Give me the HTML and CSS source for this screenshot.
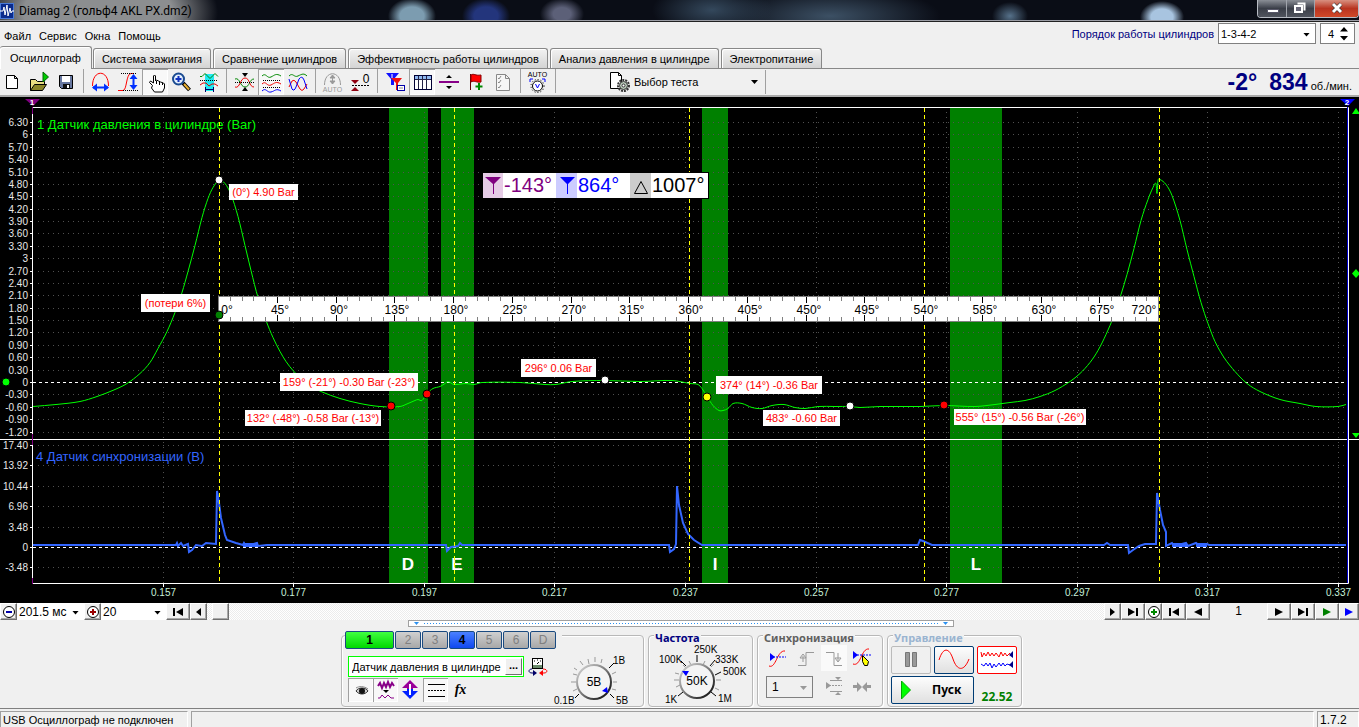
FILE: index.html
```html
<!DOCTYPE html>
<html lang="ru">
<head>
<meta charset="utf-8">
<title>Diamag 2 (гольф4 AKL PX.dm2)</title>
<link rel="stylesheet" href="styles.css">
</head>
<body>
<div class="window">
  <header class="titlebar">
    <svg class="app-icon" width="14" height="16" viewBox="0 0 14 16"><rect width="14" height="16" fill="#0a2a8c"/><rect x="0.5" y="0.5" width="13" height="15" fill="none" stroke="#4a7ad8"/><path d="M0 8h3l1-4 1 8 2-10 1 11 2-8 1 5 1-2h2" fill="none" stroke="#fff"/></svg>
    <h1 class="title">Diamag 2 (гольф4 AKL PX.dm2)</h1>
    <div class="win-buttons">
      <button class="wb" aria-label="Свернуть"><svg width="28" height="17" viewBox="0 0 28 17"><rect x="9.500" y="9.500" width="11" height="3" fill="#fff" stroke="#556"/></svg></button>
      <button class="wb" aria-label="Восстановить"><svg width="27" height="17" viewBox="0 0 27 17"><path d="M10.500 3.500h7v7" fill="none" stroke="#fff" stroke-width="2"/><rect x="8" y="6" width="7" height="6" fill="#667" stroke="#fff" stroke-width="2"/></svg></button>
      <button class="wb close" aria-label="Закрыть"><svg width="43" height="17" viewBox="0 0 43 17"><path d="M18 4l8 8M26 4l-8 8" stroke="#333" stroke-width="4"/><path d="M18 4l8 8M26 4l-8 8" stroke="#fff" stroke-width="3"/></svg></button>
    </div>
  </header>

  <div class="menurow">
    <nav class="menu"><button>Файл</button><button>Сервис</button><button>Окна</button><button>Помощь</button></nav>
    <div class="order">
      <label for="order">Порядок работы цилиндров</label>
      <span class="combo boxed order-combo"><select id="order"><option>1-3-4-2</option></select></span>
      <span class="spin"><input aria-label="Число цилиндров" value="4"><svg width="9" height="14" viewBox="0 0 9 14"><path d="M0 4.500h8L4 0zM0 9h8l-4 4.500z"/></svg></span>
    </div>
  </div>

  <div class="tabs" role="tablist">
    <button role="tab" class="tab active" aria-selected="true">Осциллограф</button>
    <button role="tab" class="tab">Система зажигания</button>
    <button role="tab" class="tab">Сравнение цилиндров</button>
    <button role="tab" class="tab">Эффективность работы цилиндров</button>
    <button role="tab" class="tab">Анализ давления в цилиндре</button>
    <button role="tab" class="tab">Электропитание</button>
  </div>

  <div class="toolbar">
    <div class="tools">
      <button class="tool" aria-label="Новый"><svg viewBox="0 0 26 26"><path d="M7.500 6.500h8l3 3v10h-11zM15.500 6.500v3h3" fill="#fff" stroke="#000"/></svg></button>
      <button class="tool" aria-label="Открыть"><svg viewBox="0 0 26 26"><path d="M4.500 21.500v-11h5l2 2h7v4" fill="#e8dc80" stroke="#000"/><path d="M4.500 21.500l4-6h12l-4 6z" fill="#8a8428" stroke="#000"/><path d="M17 3l5.500 5-5.500 5z" fill="#0c0" stroke="#060"/></svg></button>
      <button class="tool" aria-label="Сохранить"><svg viewBox="0 0 26 26"><path d="M6.500 6.500h13v13h-11l-2-2z" fill="#6878a0" stroke="#000"/><path d="M9 7h8v6H9z" fill="#fff"/><path d="M10 15h7v4h-7z" fill="#111"/><path d="M14 16h2v3h-2z" fill="#fff"/></svg></button>
      <i class="sep"></i>
      <button class="tool" aria-label="Масштаб по времени"><svg viewBox="0 0 26 26" fill="none"><path d="M4.500 17c0-17 16-17 16 0" stroke="#f00"/><path d="M5 18.500h15" stroke="#0030ff" stroke-width="2"/><path d="M4 18.500l5-4v8zM21 18.500l-5-4v8z" fill="#0030ff"/></svg></button>
      <button class="tool" aria-label="Масштаб по амплитуде"><svg viewBox="0 0 26 26" fill="none"><path d="M3 21.500h5c4 0 3-17 8-17h3" stroke="#f00"/><path d="M6 4.500h16M8 21.500h15" stroke="#000" stroke-dasharray="1 1"/><path d="M18.500 8v10" stroke="#0030ff" stroke-width="2"/><path d="M18.500 5l-4 5h8zM18.500 21l-4-5h8z" fill="#0030ff"/></svg></button>
      <button class="tool pressed" aria-label="Рука"><svg viewBox="0 0 26 26"><path d="M10.500 16.500l-3-3 1-1.500 3 2v-7l1-1 1 1v5l1-1 2 1 2 1 3 1 1 1v4l-2 4h-8l-3-4z" fill="#fff" stroke="#000"/><path d="M14.500 12v3M17.500 13v3M20.500 14v2" stroke="#000"/></svg></button>
      <button class="tool" aria-label="Лупа"><svg viewBox="0 0 26 26"><path d="M14 14l6.500 7" stroke="#000" stroke-width="4"/><path d="M15 15l5 5.500" stroke="#e8b030" stroke-width="2"/><circle cx="9.500" cy="10" r="5.500" fill="#e4f0ff" stroke="#1a4a90" stroke-width="2"/><path d="M9.500 7v6M6.500 10h6" stroke="#1030c0" stroke-width="2"/></svg></button>
      <button class="tool" aria-label="Участок"><svg viewBox="0 0 26 26" fill="none"><path d="M9 5h9v17H9z" fill="#20e8f0"/><path d="M4 7.500h2l3-3 2 2 3 3 3-3 2-2 3 3" stroke="#080"/><path d="M4 16l3-2 3 0 3 3 3-2 3 0 3 2" stroke="#d00"/><path d="M4 11.500h18" stroke="#000" stroke-dasharray="1 1"/><path d="M9.500 18v5M17.500 18v5M10 20.500h7" stroke="#006" /></svg></button>
      <i class="sep"></i>
      <button class="tool" aria-label="Совместить"><svg viewBox="0 0 26 26" fill="none"><path d="M4 10c5-2 5 8 10 8s4-8 9-8" stroke="#080"/><path d="M4 18c5 2 5-9 10-9s4 9 9 9" stroke="#e00"/><path d="M4 13.500h19" stroke="#000" stroke-dasharray="1 1"/><path d="M11 4h6l-3 4zM11 22h6l-3-4z" fill="#000"/></svg></button>
      <button class="tool pressed" aria-label="Раздельно"><svg viewBox="0 0 26 26" fill="none"><path d="M4 7c4-4 5 3 9 1s5-4 10-1" stroke="#080"/><path d="M4 15c4-4 5 3 9 1s5-4 10-1" stroke="#e00"/><path d="M4 22c4-4 5 2 9 1s5-4 10-1" stroke="#00f"/><path d="M5 11.500h18M5 18.500h18" stroke="#000" stroke-dasharray="1 1"/></svg></button>
      <button class="tool" aria-label="Наложение"><svg viewBox="0 0 26 26" fill="none"><path d="M4 7c4-4 5 2 9 0s6-3 9 0" stroke="#080"/><path d="M4 18l3-6q2-2 4 1l4 7q2 3 4 0l3-5" stroke="#e00"/><path d="M4 10l3 10q2 3 4-2l3-8q3-4 5 1l3 9" stroke="#00f"/></svg></button>
      <i class="sep"></i>
      <button class="tool" aria-label="Авто" disabled><svg viewBox="0 0 26 26" fill="none"><path d="M4.500 16c0-15 16-15 16 0" stroke="#999"/><path d="M12.500 6v9M10 9l2.500-3 2.500 3zM10 12l2.500 3 2.500-3z" stroke="#999" fill="#999"/><text x="12.500" y="23" class="tiny">AUTO</text></svg></button>
      <button class="tool" aria-label="Ноль"><svg viewBox="0 0 26 26" fill="none"><path d="M4 11h8l-4 4zM4 22h8l-4-4z" fill="#900010"/><path d="M5 16.500h18" stroke="#000" stroke-dasharray="2 1"/><text x="19" y="14" class="zero">0</text></svg></button>
      <i class="sep"></i>
      <button class="tool" aria-label="Маркеры"><svg viewBox="0 0 26 26"><path d="M4 4h13l-5 6v6h-3v-6z" fill="#1010ff"/><path d="M9 9h11l-4 5v7h-2v-7z" fill="#f01010"/><path d="M10 5v4" stroke="#fff"/><rect x="15.500" y="16.500" width="7" height="5" fill="#fff" stroke="#00a"/><path d="M17 19h4" stroke="#888"/></svg></button>
      <button class="tool pressed" aria-label="Таблица"><svg viewBox="0 0 26 26"><rect x="5.500" y="6.500" width="17" height="14" fill="#fff" stroke="#003"/><path d="M6 7h16v3H6z" fill="#90b8f0"/><path d="M6 10.500h16M9.500 7v13M13.500 7v13M17.500 7v13" stroke="#224"/></svg></button>
      <button class="tool" aria-label="Разделитель"><svg viewBox="0 0 26 26"><path d="M3 12h20v2H3z" fill="#808"/><path d="M10 9h6l-3-3zM10 17h6l-3 3z" fill="#000"/></svg></button>
      <button class="tool" aria-label="Флаг"><svg viewBox="0 0 26 26"><path d="M7.500 5v16" stroke="#600"/><path d="M8 6c3-2 4 1 10 0v7c-4 1-7-2-10 0z" fill="#f00" stroke="#800"/><path d="M16 14v7M12.500 17.500h7" stroke="#080" stroke-width="2"/></svg></button>
      <button class="tool" aria-label="Отчёт" disabled><svg viewBox="0 0 26 26"><path d="M6.500 5.500h9l4 4v12h-13zM15.500 5.500v4h4" fill="#f6f6f6" stroke="#888"/><path d="M8 9l1 1 2-3M8 13l1 1 2-3M8 18l1 1 2-3" fill="none" stroke="#888"/></svg></button>
      <i class="sep"></i>
      <button class="tool" aria-label="Авто напряжение"><svg viewBox="0 0 26 26" fill="none"><text x="12.500" y="8" class="tiny">AUTO</text><path d="M5 13v-3h3M20 13v-3h-3" stroke="#00f"/><circle cx="12.500" cy="17" r="5" stroke="#000" fill="#fff"/><circle cx="12.500" cy="17" r="6.500" stroke="#000" stroke-dasharray="1 2"/><path d="M10.500 15l2 4 2-4" stroke="#00f"/></svg></button>
      <i class="sep"></i>
    </div>
    <button class="test">
      <svg width="20" height="22" viewBox="0 0 20 22"><path d="M0.500 1.500h8l3 3v13h-11zM8.500 1.500v3h3" fill="#fff" stroke="#000"/><circle cx="13.500" cy="14.500" r="5.500" fill="none" stroke="#333" stroke-width="2" stroke-dasharray="2 1"/><circle cx="13.500" cy="14.500" r="4" fill="#b8c8b8" stroke="#333"/><circle cx="13.500" cy="14.500" r="1.500" fill="#fff" stroke="#333"/></svg>
      <span>Выбор теста</span><i class="arrow"></i>
    </button>
    <i class="sep"></i>
    <output class="rpm"><b>-2°</b><b>834</b><span>об./мин.</span></output>
  </div>

  <main class="scope"><svg id="scope" viewBox="0 97 1359 506" role="img" aria-label="Осциллограмма"></svg></main>

  <div class="navrow">
    <button class="nb w16" aria-label="Уменьшить"><svg width="14" height="14" viewBox="0 0 14 14"><circle cx="7" cy="7" r="5.500" fill="#fff" stroke="#000"/><path d="M4 7h6" stroke="#00a" stroke-width="2"/></svg></button>
    <span class="combo time-combo"><select aria-label="Развёртка"><option>201.5 мс</option></select></span>
    <button class="nb w16" aria-label="Увеличить"><svg width="14" height="14" viewBox="0 0 14 14"><circle cx="7" cy="7" r="5.500" fill="#fff" stroke="#000"/><path d="M4 7h6M7 4v6" stroke="#900" stroke-width="2"/></svg></button>
    <span class="combo div-combo"><select aria-label="Деление"><option>20</option></select></span>
    <button class="nb w24" aria-label="В начало"><svg width="12" height="8" viewBox="0 0 12 8"><path d="M1 0h2v8H1zM11 0v8L4 4z"/></svg></button>
    <button class="nb w16" aria-label="Влево"><svg width="5" height="8" viewBox="0 0 5 8"><path d="M5 0v8L0 4z"/></svg></button>
    <div class="track"><button class="nb w16 thumb" aria-label="Ползунок"></button></div>
    <button class="nb w16" aria-label="Вправо"><svg width="5" height="8" viewBox="0 0 5 8"><path d="M0 0v8l5-4z"/></svg></button>
    <button class="nb w24" aria-label="В конец"><svg width="12" height="8" viewBox="0 0 12 8"><path d="M9 0h2v8H9zM1 0v8l7-4z"/></svg></button>
    <button class="nb w16" aria-label="Добавить"><svg width="14" height="14" viewBox="0 0 14 14"><circle cx="7" cy="7" r="5.500" fill="#fff" stroke="#000"/><path d="M4 7h6M7 4v6" stroke="#080" stroke-width="2"/></svg></button>
    <button class="nb w24" aria-label="Первый"><svg width="12" height="8" viewBox="0 0 12 8"><path d="M1 0h2v8H1zM11 0v8L4 4z"/></svg></button>
    <button class="nb w24" aria-label="Предыдущий"><svg width="8" height="8" viewBox="0 0 8 8"><path d="M8 0v8L0 4z"/></svg></button>
    <output class="page">1</output>
    <button class="nb w24" aria-label="Следующий"><svg width="8" height="8" viewBox="0 0 8 8"><path d="M0 0v8l8-4z"/></svg></button>
    <button class="nb w24" aria-label="Последний"><svg width="12" height="8" viewBox="0 0 12 8"><path d="M9 0h2v8H9zM1 0v8l7-4z"/></svg></button>
    <button class="nb w24" aria-label="Воспроизвести"><svg width="8" height="8" viewBox="0 0 8 8"><path d="M0 0v8l8-4z" fill="#008000"/></svg></button>
    <button class="nb w20" aria-label="Запись"><svg width="8" height="8" viewBox="0 0 8 8"><path d="M0 0v8l8-4z" fill="#00f"/></svg></button>
  </div>

  <div class="splitter"><i></i><b></b><i></i></div>

  <div class="panels">
    <section class="group channels">
      <div class="chbar"><button class="ch c1">1</button><button class="ch">2</button><button class="ch">3</button><button class="ch c4">4</button><button class="ch">5</button><button class="ch">6</button><button class="ch">D</button></div>
      <div class="chbody">
        <div class="chleft">
          <div class="row">
            <span class="sensor"><input aria-label="Датчик" value="Датчик давления в цилиндре"><button aria-label="Выбрать">...</button></span>
            <button class="tool" aria-label="Полярность"><svg viewBox="0 0 26 26" fill="none"><rect x="8.500" y="2.500" width="10" height="10" fill="#fff" stroke="#000"/><path d="M10 5h1M13 4h1M16 5h1M13 8l2-2" stroke="#000"/><path d="M9 9h9v3H9z" fill="#6a8a6a"/><path d="M8 13c-4 0-4 4 0 4h2" stroke="#006"/><path d="M9 14l4 3-4 3z" fill="#006"/><path d="M19 13c5 0 5 4 1 4h-3" stroke="#f00"/><path d="M19 14l-4 3 4 3z" fill="#f00"/></svg></button>
          </div>
          <div class="row icons">
            <button class="tool pressed" aria-label="Видимость"><svg viewBox="0 0 26 26" fill="none"><path d="M8 13c2-4 10-4 12 0-3 4-9 4-12 0z" fill="#ccc" stroke="#333"/><circle cx="14" cy="13" r="3" fill="#111"/><path d="M8 10c3-2 8-2 12 1" stroke="#888"/></svg></button>
            <button class="tool pressed" aria-label="Фильтр"><svg viewBox="0 0 26 26" fill="none"><path d="M5 8l2-3 2 5 2-5 2 4 2-5 2 5 2-4 2 3" stroke="#808" stroke-width="2"/><path d="M10 12h6l-3 3z" fill="#000"/><path d="M5 20h2l2-3 3 3 3-3 3 3h3" stroke="#808"/></svg></button>
            <button class="tool" aria-label="Инверсия"><svg viewBox="0 0 26 26"><path d="M12 2l8 8h-5v3H9v-3H4z" fill="#909"/><path d="M12 21l8-8h-5v-2H9v2H4z" fill="#0020ff"/><path d="M12 6v11" stroke="#fff" stroke-width="2"/></svg></button>
            <button class="tool pressed" aria-label="Уровни"><svg viewBox="0 0 26 26"><path d="M5 6.500h17M5 18.500h17" stroke="#000"/><path d="M5 12.500h17" stroke="#000" stroke-dasharray="2 1"/></svg></button>
            <button class="tool fx" aria-label="Функция"><i>fx</i></button>
          </div>
        </div>
        <svg class="knob" width="92" height="62" viewBox="550 648 92 62">
          <defs><linearGradient id="rim" x1="0" y1="0" x2="1" y2="1"><stop offset="0" stop-color="#ddd"/><stop offset="0.5" stop-color="#777"/><stop offset="1" stop-color="#000"/></linearGradient></defs>
          <g stroke="#999"><path d="M574 667l3 2M580 660l3 4M588 658l1 5M595 656v5M602 658l-1 4M573 673l4 1M571 681h5M573 690l4-2M612 673l4-2M613 681h4M612 688l4 1"/></g>
          <path d="M609 667l5-5M575 697l4-4M610 693l4 4" stroke="#000"/>
          <circle class="dial" cx="594" cy="681" r="17"/>
          <path d="M602 690l5-4 1 6z" fill="#00f"/>
          <text x="594" y="685" class="kv">5В</text><text x="613" y="663">1В</text><text x="554" y="703">0.1В</text><text x="616" y="703">5В</text>
        </svg>
      </div>
    </section>

    <section class="group freq">
      <h2 class="cap">Частота</h2>
      <svg class="knob" width="98" height="62" viewBox="652 644 98 62">
        <g stroke="#999"><path d="M675 680h5M676 673l4 1M677 687l4-2M684 665l3 3M690 661l2 4M706 661l-2 4M716 688l4 2M717 680h5M712 667l3-3"/></g>
        <path d="M682 661l5 5M698 655v7M711 666l5-6M716 675l6-3M679 696l5-4M712 692l5 4" stroke="#000"/>
        <circle class="dial" cx="698" cy="681" r="17"/>
        <path d="M683 671h7l-3 5z" fill="#00f"/>
        <text x="698" y="685" class="kv">50K</text><text x="695" y="653">250K</text><text x="660" y="663">100K</text><text x="716" y="663">333K</text><text x="724" y="675">500K</text><text x="666" y="703">1K</text><text x="719" y="702">1M</text>
      </svg>
    </section>

    <section class="group sync">
      <h2 class="cap">Синхронизация</h2>
      <div class="syncgrid">
        <button class="tool" aria-label="Запуск"><svg viewBox="0 0 26 26" fill="none"><path d="M4 21c7 3 8-16 16-15" stroke="#f00"/><path d="M5 12h16" stroke="#00f" stroke-dasharray="2 1"/><path d="M5 8l5 4-5 4z" fill="#00f"/></svg></button>
        <button class="tool" aria-label="Фронт" disabled><svg viewBox="0 0 26 26" fill="none"><path d="M5 20.500h8v-13h8M10 17v-6M7 13l3-4 3 4z" stroke="#999" /></svg></button>
        <button class="tool light" aria-label="Спад" disabled><svg viewBox="0 0 26 26" fill="none"><path d="M5 7.500h8v13h8M17 8v8M14 13l3 4 3-4z" stroke="#999"/></svg></button>
        <button class="tool" aria-label="Ручная"><svg viewBox="0 0 26 26" fill="none"><path d="M4 19c8 3 8-16 16-15" stroke="#f00"/><path d="M5 10h17" stroke="#00f" stroke-dasharray="2 1"/><path d="M4 6l5 4-5 4z" fill="#00f"/><path d="M13.500 10.500l6 6-1 4h-3l-2-4z" fill="#ff0" stroke="#000"/></svg></button>
        <span class="combo boxed sync-combo"><select aria-label="Канал" disabled><option>1</option></select></span>
        <button class="tool" aria-label="Уровень" disabled><svg viewBox="0 0 26 26" fill="none"><path d="M5 12.500h16" stroke="#999" stroke-dasharray="2 1"/><path d="M9 7.500h12M9 18.500h12" stroke="#999"/><path d="M5 9l5 3.500-5 3.500zM14 4h6l-3 3zM14 22h6l-3-3z" fill="#999"/></svg></button>
        <button class="tool" aria-label="Центр" disabled><svg viewBox="0 0 26 26"><path d="M4 12h4V9l5 5-5 5v-4H4zM22 12h-4V9l-5 5 5 5v-4h4z" fill="#999"/></svg></button>
      </div>
    </section>

    <section class="group control">
      <h2 class="cap">Управление</h2>
      <div class="ctlgrid">
        <button class="cb off" aria-label="Пауза" disabled><svg width="14" height="16" viewBox="0 0 14 16"><path d="M1.500 0.500h4v14h-4zM8.500 0.500h4v14h-4z" fill="#999" stroke="#777"/></svg></button>
        <button class="cb blue" aria-label="Синус"><svg width="32" height="22" viewBox="0 0 32 22" fill="none"><path d="M1 11C5-2 11-2 15 10s11 13 16 0" stroke="#f00"/></svg></button>
        <button class="cb red" aria-label="Запись сигналов"><svg width="34" height="20" viewBox="0 0 34 20" fill="none"><path d="M1 2l1 5 2-4 2 3 2-4 2 4 2-3 2 3 2-3 3 4 2-5 2 4 2-3 2 3 3-3" stroke="#f00"/><path d="M1 14l3 2 2-3 2 3 2-3 2 5 2-4 2 3 3-4 2 3 2-3 2 3 2-2 3 1" stroke="#00f"/><path d="M33 1v7l-4-3zM33 11v7l-4-3z" fill="#008"/></svg></button>
        <button class="cb blue start"><svg width="11" height="20" viewBox="0 0 11 20"><path d="M0.500 1v18l9-9z" fill="#0f0" stroke="#0a0"/></svg><span>Пуск</span></button>
        <output class="elapsed">22.52</output>
      </div>
    </section>
  </div>

  <footer class="status"><span class="s1">USB Осциллограф не подключен</span><span class="s2"></span><span class="s3">1.7.2</span></footer>
</div>
<script src="scope.js"></script>
</body>
</html>
```
FILE: styles.css
```css
* { box-sizing: border-box; }
body { margin: 0; background: #f0f0f0; color: #000; font: 11px/14px "Liberation Sans", Arial, sans-serif; }
button, input, select { font: inherit; color: inherit; margin: 0; padding: 0; border: 0; background: none; }
h1, h2 { margin: 0; }
.window { display: flex; flex-direction: column; min-height: 100vh; overflow: hidden; }

.titlebar {
  display: flex; height: 22px; align-items: center; gap: 5px; border-bottom: 1px solid #222;
  box-shadow: inset 0 -1px #9a9ca4;
  background:
    radial-gradient(ellipse 120px 60px at 98px 12px, #8c8e90 62%, transparent),
    radial-gradient(ellipse 24px 18px at 412px 16px, #7c9cb0 50%, transparent),
    radial-gradient(ellipse 24px 18px at 486px 16px, #23357c 50%, transparent),
    radial-gradient(ellipse 22px 16px at 562px 14px, #5c6078 40%, transparent),
    radial-gradient(ellipse 60px 26px at 712px 10px, #34485c, transparent),
    radial-gradient(ellipse 110px 30px at 830px 16px, #3c5064, transparent),
    radial-gradient(ellipse 18px 14px at 1010px 16px, #56718a, transparent),
    radial-gradient(ellipse 22px 16px at 1162px 17px, #a8c4e0 50%, transparent),
    #0a0d16;
}
.title { flex: 1; font: 400 12px/16px Roboto, "Noto Sans", sans-serif; }
.win-buttons { display: flex; align-self: flex-start; height: 18px; border: 1px solid #b8bcc4; border-top: 0; border-radius: 0 0 4px 4px; overflow: hidden; }
.wb { display: flex; background: linear-gradient(#8a8e96, #3a3e48 50%, #50545e); border-right: 1px solid #a0a4ac; }
.wb.close { background: linear-gradient(#d89080, #b83420 50%, #d04828); border: 0; }

.menurow { display: flex; justify-content: space-between; height: 24px; padding: 1px 4px 0 0; }
.menu { display: flex; gap: 8px; padding: 2px 0 0 4px; align-items: center; }
.order { display: flex; align-items: flex-start; gap: 4px; color: #000080; }
.order label { line-height: 22px; }
.combo { position: relative; display: inline-flex; background: #fff; color: #000; }
.combo select { appearance: none; width: 100%; padding-left: 2px; border-radius: 0; opacity: 1; }
.combo::after { content: ""; position: absolute; right: 5px; top: 50%; width: 7px; height: 4px; margin-top: -1px; background: #000; clip-path: polygon(0 0, 100% 0, 50% 100%); pointer-events: none; }
.boxed { border: 1px solid #808080; }
.order-combo { width: 98px; height: 21px; }
.spin { display: flex; align-items: center; justify-content: space-between; width: 35px; height: 21px; padding: 0 5px 0 7px; border: 1px solid #808080; background: #fff; color: #000; }
.spin input { width: 10px; }

.tabs { display: flex; align-items: flex-end; gap: 2px; height: 23px; border-bottom: 1px solid #888; }
.tab { flex: none; height: 20px; padding: 0 8px; border: 1px solid #888; border-bottom: 0; border-radius: 3px 3px 0 0; background: linear-gradient(#f2f2f2, #d4d4d4); box-shadow: inset 1px 1px #fff; }
.tab.active { height: 23px; padding: 0 10px; margin: 0 -1px -1px 0; border-left: 0; background: #f0f0f0; }

.toolbar { display: flex; align-items: center; height: 28px; padding-right: 7px; border-bottom: 2px solid #aaa; }
.tools { display: flex; gap: 1px; margin-left: -1px; }
.tool { flex: none; width: 26px; height: 26px; }
.tool svg { display: block; width: 26px; height: 26px; }
.pressed { background: #f8f8f8; box-shadow: inset 1px 1px #a0a0a0, inset -1px -1px #fff; }
.sep { flex: none; width: 7px; height: 24px; background: linear-gradient(#a0a0a0, #a0a0a0) 3px 0 / 1px 100% no-repeat; }
.tiny { font: 7px "Liberation Sans", sans-serif; text-anchor: middle; fill: #000; }
[disabled] .tiny { fill: #999; }
.zero { font: 12px "Liberation Sans", sans-serif; text-anchor: middle; fill: #000; }
.test { display: flex; align-items: center; gap: 4px; width: 152px; margin-left: 51px; text-align: left; }
.test span { flex: 1; }
.arrow { width: 7px; height: 4px; margin-right: 4px; background: #000; clip-path: polygon(0 0, 100% 0, 50% 100%); }
.rpm { display: flex; align-items: baseline; margin-left: auto; }
.rpm b { font: bold 23px/26px "Liberation Sans", sans-serif; color: #000080; margin-left: 12px; }
.rpm span { margin-left: 3px; }

.scope { background: #000; }
.scope svg { display: block; width: 100%; height: auto; }
.scope text { font-family: "Liberation Sans", Arial, sans-serif; }
.axis { font-size: 10px; fill: #e8e8e8; text-anchor: end; }
.time { font-size: 10px; fill: #c8f0d8; text-anchor: middle; }
.name { font-size: 13px; }
.tag { font-size: 11px; fill: #f00; text-anchor: middle; }
.deg { font-size: 12px; fill: #000; text-anchor: middle; }
.band { font-size: 17px; font-weight: bold; fill: #fff; text-anchor: middle; }
.cursor { font-size: 20px; }
.mark { font-size: 8px; font-weight: bold; fill: #fff; text-anchor: middle; }
.grid { stroke: #505050; stroke-dasharray: 1 4; }
.zeroline { stroke: #fff; stroke-dasharray: 3 3; }
.tdc { stroke: #ff0; stroke-dasharray: 4 3; }

.navrow { display: flex; height: 17px; }
.nb { flex: none; display: flex; align-items: center; justify-content: center; height: 17px; border: 1px solid; border-color: #fff #707070 #707070 #fff; background: #f0f0f0; box-shadow: inset -1px -1px #a8a8a8; }
.w16 { width: 17px; }
.w20 { width: 20px; }
.w24 { width: 24px; }
.time-combo { width: 67px; font-size: 12px; }
.div-combo { width: 65px; font-size: 12px; }
.track { flex: 1; padding-left: 5px; background: repeating-conic-gradient(#fff 0 25%, #ececec 0 50%) 0 0 / 2px 2px; }
.page { width: 57px; text-align: center; font-size: 12px; line-height: 17px; }

.splitter { align-self: center; display: flex; align-items: center; gap: 5px; width: 546px; height: 7px; margin-left: 3px; padding: 0 5px; border: 1px solid #a0a0a0; background: #fff; }
.splitter i { width: 5px; height: 3px; background: #2a90f0; clip-path: polygon(0 0, 100% 0, 50% 100%); }
.splitter b { flex: 1; height: 1px; background: repeating-linear-gradient(90deg, #2a90f0 0 1px, transparent 0 3px); }

.panels { display: flex; justify-content: center; gap: 4px; padding: 4px 0 1px 4px; }
.group { position: relative; z-index: 0; height: 76px; }
.group::before { content: ""; position: absolute; z-index: -1; inset: 4px 0 0; border: 1px solid #b8b8b8; border-radius: 4px; box-shadow: inset 1px 1px #fff, 1px 1px #fff; }
.cap { width: max-content; margin-left: 6px; padding: 0 1px; background: #f0f0f0; font: bold 11px/13px "Noto Sans", sans-serif; color: #000080; }
.channels { width: 303px; }
.chbar { display: flex; gap: 1px; width: max-content; margin-left: 4px; padding-right: 6px; background: #f0f0f0; }
.ch { width: 26px; height: 18px; border: 1px solid #1a4a80; border-radius: 2px; background: linear-gradient(#d0d0d0, #a8a8a8); color: #808080; font-size: 12px; }
.c1 { width: 49px; background: linear-gradient(#40ff40, #00d800); color: #000; font-weight: bold; }
.c4 { background: linear-gradient(#4a80ff, #1048f0); color: #000; font-weight: bold; }
.chbody { display: flex; }
.chleft { width: 209px; padding: 7px 0 0 7px; }
.row { display: flex; }
.sensor { display: flex; width: 177px; height: 21px; padding: 1px; border: 1px solid #0f0; background: #fff; }
.sensor input { flex: 1; min-width: 0; padding-left: 2px; }
.sensor button { width: 17px; border: 1px solid; border-color: #fff #707070 #707070 #fff; background: #f0f0f0; font-weight: bold; line-height: 8px; padding-bottom: 4px; }
.row .tool { height: 22px; }
.icons .tool { width: 25px; height: 24px; }
.fx { font: bold italic 14px "Liberation Serif", serif; }
.knob text { font: 10px "Liberation Sans", sans-serif; }
.knob .kv { font-size: 12px; text-anchor: middle; }
.dial { fill: #f4f4f4; stroke: url(#rim); stroke-width: 2; }
.freq { width: 105px; }
.freq .knob { display: block; margin-left: 3px; }
.sync { width: 126px; }
.sync .cap { color: #606060; }
.syncgrid { display: grid; grid-template-columns: repeat(4, 26px); gap: 2px 2px; padding: 1px 0 0 8px; }
.sync-combo { grid-column: span 2; width: 47px; height: 22px; margin: 3px 0 0 1px; background: #f0f0f0; }
.sync-combo::after { background: #999; }
.sync-combo select { padding-left: 5px; color: #000; font-size: 12px; }
.light { background: #fafafa; }
.control { width: 135px; }
.control .cap { color: #9ab4d0; }
.ctlgrid { display: grid; grid-template-columns: repeat(3, 40px); grid-template-rows: 28px 28px; gap: 2px 3px; padding: 2px 0 0 4px; }
.cb { display: flex; align-items: center; justify-content: center; border: 1px solid #bbb; border-radius: 2px; background: linear-gradient(#fdfdfd, #e0e0e0); }
.blue { border-color: #003c74; }
.red { border-color: #f00; background: #fff; }
.off { background: #f0f0f0; }
.start { grid-column: span 2; justify-content: flex-start; gap: 20px; padding-left: 9px; font: bold 12px/14px "Noto Sans", sans-serif; }
.elapsed { align-self: end; text-align: center; color: #008000; font: bold 12px/14px "Noto Sans", sans-serif; }

.status { display: flex; gap: 3px; margin-top: auto; height: 20px; padding-top: 2px; border-top: 1px solid #808080; line-height: 16px; }
.status span { border: 1px solid; border-color: #a0a0a0 #fff #fff #a0a0a0; padding-left: 2px; }
.s1 { width: 188px; border-left: 0; }
.s2 { flex: 1; }
.s3 { width: 42px; font-size: 12px; }
```
FILE: scope.js
```js
const parts = [];
const add = s => parts.push(s);
const text = (x, y, cls, s, extra = "") => add(`<text x="${x}" y="${y}" class="${cls}" ${extra}>${s}</text>`);
const line = (x1, y1, x2, y2, attrs) => add(`<line x1="${x1}" y1="${y1}" x2="${x2}" y2="${y2}" ${attrs}/>`);

// Smooth path through a list of samples
function smooth(samples) {
  const p = samples.split(" ").map(s => s.split(",").map(Number));
  let d = `M${p[0]}`;
  for (let i = 0; i < p.length - 1; i++) {
    const a = p[i - 1] || p[i], b = p[i], c = p[i + 1], e = p[i + 2] || c;
    const h = (c[0] - b[0]) / 3;
    const mb = c[0] === a[0] ? 0 : (c[1] - a[1]) / (c[0] - a[0]);
    const mc = e[0] === b[0] ? 0 : (e[1] - b[1]) / (e[0] - b[0]);
    d += `C${b[0] + h} ${b[1] + h * mb} ${c[0] - h} ${c[1] - h * mc} ${c[0]} ${c[1]}`;
  }
  return d;
}

// Highlighted phases
const bands = [[389, 39, "D", 408], [441, 33, "E", 457], [702, 26, "I", 715], [950, 52, "L", 976]];
bands.forEach(([x, w]) => add(`<rect x="${x}" y="108" width="${w}" height="475" fill="#008000"/>`));

// Value axes and grid
for (let i = -4; i <= 21; i++) {
  const y = Math.round(382 - i * 12.38) + 0.5;
  if (i) line(38, y, 1346, y, 'class="grid"');
  line(30, y, 33, y, 'stroke="#fff"');
  const v = i % 10 ? (i * 0.3).toFixed(2) : String(i * 0.3);
  text(28, y + 3, "axis", v);
}
for (let i = -1; i <= 5; i++) {
  const y = Math.round(547 - i * 20.4) + 0.5;
  if (i) line(38, y, 1346, y, 'class="grid"');
  line(30, y, 33, y, 'stroke="#fff"');
  text(28, y + 3, "axis", i ? (i * 3.48).toFixed(2) : "0");
}
for (let i = 0; i < 10; i++) {
  const x = Math.floor(163 + i * 130.6) + 0.5;
  line(x, 112, x, 583, 'class="grid"');
  line(x, 584, x, 587, 'stroke="#fff"');
  text(x, 596, "time", (0.157 + i * 0.02).toFixed(3));
}
line(33, 382.5, 1346, 382.5, 'class="zeroline"');
line(33, 547.5, 1346, 547.5, 'class="zeroline"');

// Frame
add('<path d="M32.5 107.500H1348.500V583.500H32.500zM0 439.500H1359" fill="none" stroke="#fff"/>');
line(1347.5, 107, 1347.5, 583, 'stroke="#0000d0"');
add('<path d="M32.5 107v7M32.5 434v11M32.5 578v6" stroke="#800080"/>');

text(37, 129, "name", "1 Датчик давления в цилиндре (Bar)", 'fill="#00ff00"');
text(36, 461, "name", "4 Датчик синхронизации (В)", 'fill="#3366ff"');

// Traces
const pressure = "33,406 56,404 80,401 97,396 115,389 127,383 140,373 150,362 158,348 167,331 175,312 182,292 188,271 195,245 202,217 208,198 213,187 219,180 225,183 231,194 238,216 245,245 251,270 258,297 266,320 273,337 280,351 286,361 293,370 300,377 310,385 321,391 340,398 360,403 380,406 400,406 408,403 415,400 418,399 422,400 427,393 433,388 440,386 445,383 448,381 454,384 466,383 474,384 482,382 520,382 545,384 556,384 572,381 605,380 640,381 672,380 690,383 698,384 702,388 707,396 713,405 719,410 723,410 728,408 733,403 742,403 752,407 762,408 772,405 784,404 795,407 805,408 818,406 835,406 850,406 860,407 880,406 920,406 944,405 975,406 995,404 1010,402 1025,400 1040,396 1055,390 1070,381 1080,373 1090,362 1098,350 1106,334 1114,315 1121,294 1127,274 1134,248 1141,220 1148,199 1153,187 1156,183 1157,193 1158,180 1160,179 1166,184 1172,195 1180,220 1187,249 1194,276 1201,302 1208,323 1215,341 1224,357 1235,371 1247,383 1260,391 1280,399 1300,403 1316,406 1338,406 1346,404";
const sync = "33,545 176,545 177,543 178,546 181,543 183,546 188,544 189,552 192,550 196,545 202,546 206,543 216,544 217,491 219,503 221,518 225,535 227,540 236,543 243,545 244,543 246,546 257,543 258,546 267,545 446,545 447,551 451,547 458,546 460,543 462,545 669,545 670,552 674,549 676,544 677,486 679,505 683,523 688,534 694,540 702,545 918,545 920,540 923,541 932,545 1104,545 1107,543 1110,545 1128,545 1129,553 1133,550 1139,546 1145,544 1156,544 1157,493 1160,510 1163,525 1166,532 1166,546 1172,543 1174,546 1186,543 1188,546 1196,543 1200,546 1207,544 1209,545 1346,545";
add(`<path d="${smooth(pressure)}" fill="none" stroke="#00ff00" transform="translate(0 0.5)"/>`);
add(`<polyline points="${sync}" fill="none" stroke="#3366ff" stroke-width="2"/>`);
add('<path d="M243 545h15M1172 545h15M1196 545h11" stroke="#3366ff" stroke-width="4"/>');
bands.forEach(b => text(b[3], 570, "band", b[2]));
[219, 454, 689, 924, 1159].forEach(x => line(x + 0.5, 108, x + 0.5, 583, 'class="tdc"'));

// Crank angle ruler
add('<rect x="218.5" y="296.500" width="940" height="25" fill="#fff" stroke="#808080"/>');
for (let i = 1; i < 80; i++) {
  const x = Math.round(219 + i * 11.75) - 0.5;
  const major = i % 5 === 0;
  const len = major ? 6 : 4;
  add(`<path d="M${x} 297v${len}M${x} 321v-${len}" stroke="${major ? "#000" : "#808080"}"/>`);
}
for (let i = 0; i <= 16; i++) {
  const x = i === 0 ? 227 : i === 16 ? 1144 : Math.round(221 + i * 58.75);
  text(x, 314, "deg", i * 45 + "°");
}

// Measured points
const dot = (x, y, fill) => add(`<circle cx="${x}" cy="${y}" r="4" fill="${fill}" stroke="#000"/>`);
dot(219, 180, "#fff"); dot(219, 315, "#008000"); dot(391, 406, "#f00"); dot(427, 394, "#f00");
dot(605, 380, "#fff"); dot(707, 397, "#ff0"); dot(850, 406, "#fff"); dot(944, 405, "#f00");
dot(6, 382, "#0f0");
[
  [229, 184, 69, 16, "(0°) 4.90 Bar"], [141, 294, 69, 18, "(потери 6%)"],
  [280, 373, 138, 18, "159° (-21°) -0.30 Bar (-23°)"], [245, 410, 136, 16, "132° (-48°) -0.58 Bar (-13°)"],
  [521, 359, 75, 18, "296° 0.06 Bar"], [716, 376, 106, 18, "374° (14°) -0.36 Bar"],
  [763, 410, 77, 16, "483° -0.60 Bar"], [954, 409, 132, 16, "555° (15°) -0.56 Bar (-26°)"]
].forEach(([x, y, w, h, s]) => {
  add(`<rect x="${x}" y="${y}" width="${w}" height="${h}" fill="#fff"/>`);
  text(x + w / 2, y + h / 2 + 4, "tag", s);
});

// Cursor readout
add('<rect x="482.5" y="172.500" width="226" height="26" fill="#fff" stroke="#000"/>');
add('<path d="M483 173h20v25h-20z" fill="#e6cce6"/><path d="M556 173h21v25h-21z" fill="#ccccff"/><path d="M630 173h21v25h-21z" fill="#ccc"/>');
add('<path d="M485 177h16l-7 7v10h-1v-10z" fill="#800080"/><path d="M560 177h15l-7 7v10h-1v-10z" fill="#00f"/><path d="M634.5 193.500h13l-6.500-12z" fill="none" stroke="#000"/>');
text(504, 192, "cursor", "-143°", 'fill="#800080"');
text(578, 192, "cursor", "864°", 'fill="#0000ff"');
text(652, 192, "cursor", "1007°", 'fill="#000"');

// Cursor and level handles
add('<path d="M25 99h15l-7 7z" fill="#800080"/><path d="M1340 99h15l-7 7z" fill="#00f"/>');
text(32, 105, "mark", "1");
text(1347, 105, "mark", "2");
add('<path d="M1352 114h8l-4-6zM1356 269l4 4.500-4 4.500-4-4.500zM1352 433h8l-4 5z" fill="#0f0"/>');

document.getElementById("scope").innerHTML = parts.join("");
```
